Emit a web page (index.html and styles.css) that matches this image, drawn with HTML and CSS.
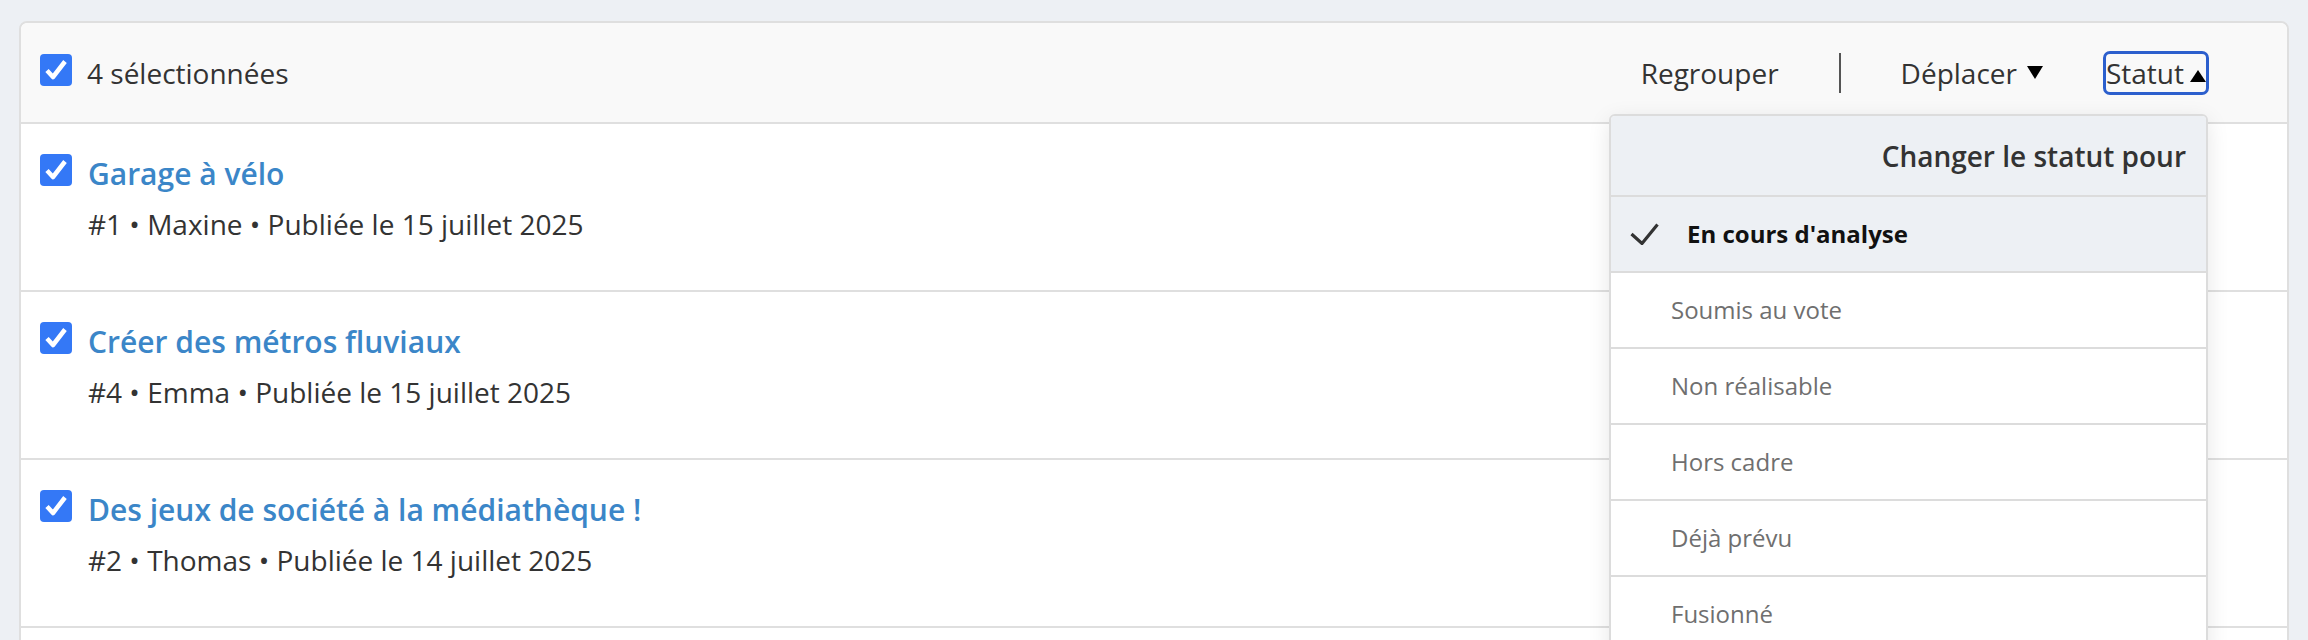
FILE: index.html
```html
<!DOCTYPE html>
<html lang="fr">
<head>
<meta charset="utf-8">
<title>Idées sélectionnées</title>
<link rel="stylesheet" href="styles.css">
</head>
<body>
<div class="card">
  <div class="bulk">
    <div class="bulk-left">
      <span class="cb"><svg viewBox="0 0 32 32" width="32" height="32"><rect width="32" height="32" rx="4" fill="#3478f6"/><path d="M7 16.5 L13 23 L25 7.5" fill="none" stroke="#fff" stroke-width="4.5" stroke-linejoin="round"/></svg></span>
      <span class="count">4 sélectionnées</span>
    </div>
    <div class="actions">
      <button class="act">Regrouper</button>
      <span class="sep"></span>
      <button class="act">Déplacer<span class="tri-down"></span></button>
      <div class="status-wrap">
        <button class="act status">Statut<span class="tri-up"></span></button>
        <div class="menu">
          <div class="menu-head">Changer le statut pour</div>
          <ul class="menu-list">
            <li class="mi selected"><svg class="tick" viewBox="0 0 29 22" width="29" height="22"><path d="M1.5 11 L12 20.5 L27.5 1.5" fill="none" stroke="#333" stroke-width="3.2"/></svg>En cours d'analyse</li>
            <li class="mi">Soumis au vote</li>
            <li class="mi">Non réalisable</li>
            <li class="mi">Hors cadre</li>
            <li class="mi">Déjà prévu</li>
            <li class="mi">Fusionné</li>
          </ul>
        </div>
      </div>
    </div>
  </div>
  <ul class="list">
    <li class="row">
      <span class="cb"><svg viewBox="0 0 32 32" width="32" height="32"><rect width="32" height="32" rx="4" fill="#3478f6"/><path d="M7 16.5 L13 23 L25 7.5" fill="none" stroke="#fff" stroke-width="4.5" stroke-linejoin="round"/></svg></span>
      <div class="row-body">
        <a class="title" href="#">Garage à vélo</a>
        <div class="meta">#1 • Maxine • Publiée le 15 juillet 2025</div>
      </div>
    </li>
    <li class="row">
      <span class="cb"><svg viewBox="0 0 32 32" width="32" height="32"><rect width="32" height="32" rx="4" fill="#3478f6"/><path d="M7 16.5 L13 23 L25 7.5" fill="none" stroke="#fff" stroke-width="4.5" stroke-linejoin="round"/></svg></span>
      <div class="row-body">
        <a class="title" href="#">Créer des métros fluviaux</a>
        <div class="meta">#4 • Emma • Publiée le 15 juillet 2025</div>
      </div>
    </li>
    <li class="row">
      <span class="cb"><svg viewBox="0 0 32 32" width="32" height="32"><rect width="32" height="32" rx="4" fill="#3478f6"/><path d="M7 16.5 L13 23 L25 7.5" fill="none" stroke="#fff" stroke-width="4.5" stroke-linejoin="round"/></svg></span>
      <div class="row-body">
        <a class="title" href="#">Des jeux de société à la médiathèque !</a>
        <div class="meta">#2 • Thomas • Publiée le 14 juillet 2025</div>
      </div>
    </li>
  </ul>
</div>
</body>
</html>
```

FILE: styles.css
```css
* { box-sizing: border-box; }

html, body {
  margin: 0;
  background: #edf0f4;
  font-family: "Open Sans", "Noto Sans", sans-serif;
  color: #333;
}

body {
  padding: 21px 19px 0;
}

.card {
  background: #fff;
  border: 2px solid #dfdfdf;
  border-radius: 8px;
}

.bulk {
  display: flex;
  align-items: center;
  justify-content: space-between;
  height: 101px;
  padding: 0 78px 0 19px;
  background: #f9f9f9;
  border-bottom: 2px solid #dfdfdf;
  border-radius: 7px 7px 0 0;
}

.bulk-left {
  display: flex;
  align-items: flex-start;
  gap: 15px;
}

.cb {
  display: block;
  width: 32px;
  height: 32px;
  flex: none;
}
.cb svg { display: block; }

.count {
  font-size: 28px;
  line-height: 38px;
}

.actions {
  display: flex;
  align-items: center;
  gap: 60px;
}

.act {
  display: flex;
  align-items: center;
  background: none;
  border: none;
  padding: 0;
  margin: 0;
  font: inherit;
  font-size: 28px;
  line-height: 38px;
  color: #333;
  cursor: pointer;
}

.sep {
  display: block;
  width: 2px;
  height: 40px;
  background: #555;
}

.tri-down {
  display: block;
  margin-left: 10px;
  width: 0;
  height: 0;
  border-left: 8px solid transparent;
  border-right: 8px solid transparent;
  border-top: 13px solid #000;
}

.status-wrap {
  position: relative;
}

.status {
  border: 3px solid #2c5fcd;
  border-radius: 7px;
}

.tri-up {
  display: block;
  margin-left: 6px;
  margin-top: 6px;
  width: 0;
  height: 0;
  border-left: 8px solid transparent;
  border-right: 8px solid transparent;
  border-bottom: 12px solid #000;
}

.menu {
  position: absolute;
  top: calc(100% + 19px);
  right: 1px;
  width: 599px;
  background: #fff;
  border: 2px solid #dcdcdc;
  border-radius: 6px;
  box-shadow: 0 6px 22px rgba(0, 0, 0, 0.1);
  overflow: hidden;
  z-index: 10;
}

.menu-head {
  padding: 21px 20px 20px;
  text-align: right;
  font-size: 28px;
  line-height: 38px;
  font-weight: 600;
  color: #333;
  background: #edf0f4;
  border-bottom: 2px solid #dcdcdc;
}

.menu-list {
  list-style: none;
  margin: 0;
  padding: 0;
}

.mi {
  display: flex;
  align-items: center;
  height: 76px;
  padding-left: 60px;
  border-bottom: 2px solid #dcdcdc;
  font-size: 24px;
  color: #6f6f6f;
}

.mi.selected {
  padding-left: 19px;
  background: #edf0f4;
  color: #111;
  font-weight: 700;
}

.tick {
  display: block;
  margin-right: 28px;
  flex: none;
}

.list {
  list-style: none;
  margin: 0;
  padding: 0 0 60px;
}

.row {
  display: flex;
  align-items: flex-start;
  gap: 16px;
  padding: 29px 19px 47px;
  border-bottom: 2px solid #dfdfdf;
}

.row .cb {
  margin-top: 1px;
}

.row-body {
  display: flex;
  flex-direction: column;
}

.title {
  font-size: 30px;
  line-height: 41px;
  font-weight: 600;
  color: #3b86c8;
  text-decoration: none;
}

.meta {
  margin-top: 11px;
  font-size: 28px;
  line-height: 38px;
  color: #333;
}
```
